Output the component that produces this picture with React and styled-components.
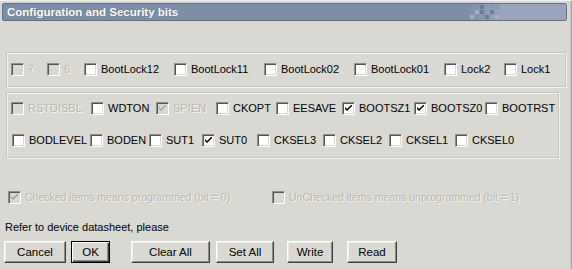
import React from "react";
import styled, { createGlobalStyle } from "styled-components";

const GlobalStyle = createGlobalStyle`
    html, body {
        margin: 0;
        padding: 0;
        background: #d9d8d2;
    }
    body {
        font-family: "Liberation Sans", Arial, sans-serif;
    }
`;

//Fuse data
const lockBits = [
    { label: "7", w: 36, disabled: true },
    { label: "6", w: 37, disabled: true },
    { label: "BootLock12", w: 90 },
    { label: "BootLock11", w: 90 },
    { label: "BootLock02", w: 90 },
    { label: "BootLock01", w: 90 },
    { label: "Lock2", w: 60 },
    { label: "Lock1" },
];

const highFuses = [
    { label: "RSTDISBL", w: 80, disabled: true },
    { label: "WDTON", w: 65 },
    { label: "SPIEN", w: 60, disabled: true, checked: true },
    { label: "CKOPT", w: 60 },
    { label: "EESAVE", w: 66 },
    { label: "BOOTSZ1", w: 72, checked: true },
    { label: "BOOTSZ0", w: 71, checked: true },
    { label: "BOOTRST" },
];

const lowFuses = [
    { label: "BODLEVEL", w: 78 },
    { label: "BODEN", w: 59 },
    { label: "SUT1", w: 53 },
    { label: "SUT0", w: 55, checked: true },
    { label: "CKSEL3", w: 66 },
    { label: "CKSEL2", w: 66 },
    { label: "CKSEL1", w: 66 },
    { label: "CKSEL0" },
];

const buttons = [
    { label: "Cancel", w: 62, ml: 0 },
    { label: "OK", w: 39, ml: 5, def: true },
    { label: "Clear All", w: 79, ml: 21 },
    { label: "Set All", w: 58, ml: 6 },
    { label: "Write", w: 46, ml: 13 },
    { label: "Read", w: 50, ml: 14 },
];

const CheckBox = ({ checked, disabled, label, w, size }) => (
    <Item $w={w}>
        <Box $disabled={disabled}>
            {checked && (
                <svg width="7" height="7" viewBox="0 0 7 7">
                    <path d="M0 2 L0 4 L2 6 L7 1 L7 -1 L2 4 Z" fill={disabled ? "#a3a29c" : "#000"} />
                </svg>
            )}
        </Box>
        <Label $disabled={disabled} $size={size}>{label}</Label>
    </Item>
);

const Checker = () => (
    <svg width="30" height="14" viewBox="0 0 30 14">
        <rect x="10" y="0" width="4" height="4" fill="#6b7b98" />
        <rect x="20" y="0" width="4" height="4" fill="#8796b0" />
        <rect x="25" y="0" width="4" height="4" fill="#8796b0" />
        <rect x="5" y="5" width="4" height="4" fill="#a4afc4" />
        <rect x="10" y="5" width="4" height="4" fill="#6b7b98" />
        <rect x="20" y="5" width="4" height="4" fill="#6b7b98" />
        <rect x="0" y="10" width="4" height="4" fill="#a4afc4" />
        <rect x="5" y="10" width="4" height="4" fill="#8796b0" />
        <rect x="15" y="10" width="4" height="4" fill="#6b7b98" />
        <rect x="25" y="10" width="4" height="4" fill="#a4afc4" />
    </svg>
);

const App = () => {
    return (
        <Window>
            <GlobalStyle />
            <TitleBar>
                <Title>Configuration and Security bits</Title>
                <Pattern>
                    <Checker />
                </Pattern>
            </TitleBar>
            <Group $mr={5}>
                <Row $h={33}>
                    {lockBits.map((b) => (
                        <CheckBox key={b.label} {...b} />
                    ))}
                </Row>
            </Group>
            <Group $mt={5} $mr={12}>
                <Row $h={31}>
                    {highFuses.map((b) => (
                        <CheckBox key={b.label} {...b} />
                    ))}
                </Row>
                <Row $h={33} $pl={1}>
                    {lowFuses.map((b) => (
                        <CheckBox key={b.label} {...b} />
                    ))}
                </Row>
            </Group>
            <Legend>
                <CheckBox label="Checked items means programmed (bit = 0)" w={264} size={10.5} checked disabled />
                <CheckBox label="UnChecked items means unprogrammed (bit = 1)" size={10.5} disabled />
            </Legend>
            <Note>Refer to device datasheet, please</Note>
            <ButtonBar>
                {buttons.map((b) => (
                    <Button key={b.label} $w={b.w} $ml={b.ml} $default={b.def}>
                        {b.label}
                    </Button>
                ))}
            </ButtonBar>
        </Window>
    );
};

const Window = styled.div`
    width: 572px;
    height: 269px;
    box-sizing: border-box;
    background: #d9d8d2;
    border-top: 1px solid #f1f0ec;
    border-right: 1px solid #a7a6a0;
    box-shadow: inset -1px 0 #c3c2bc;
    padding-top: 2px;
    display: flex;
    flex-direction: column;
    overflow: hidden;
`;

const TitleBar = styled.div`
    height: 18px;
    margin: 0 4px 0 2px;
    box-sizing: border-box;
    border: 1px solid #5f6f8c;
    border-radius: 2px;
    background: linear-gradient(to right, #7e8da8 0%, #7e8da8 82%, #9aa5bc 89%, #9aa5bc 100%);
    display: flex;
    align-items: center;
    padding-left: 4px;
`;

const Title = styled.span`
    color: #fff;
    font-weight: bold;
    font-size: 11.5px;
    text-shadow: 0 0 1px #4c5a74;
`;

const Pattern = styled.div`
    margin-left: auto;
    margin-right: 66px;
    display: flex;
`;

const Group = styled.div`
    margin: ${(p) => p.$mt || 31}px ${(p) => p.$mr}px 0 6px;
    border: 1px solid #c6c5be;
    box-shadow: inset 1px 1px #f3f2ee, 1px 1px #f3f2ee;
    padding: 0 4px;
`;

const Row = styled.div`
    height: ${(p) => p.$h}px;
    padding-left: ${(p) => p.$pl || 0}px;
    display: flex;
    align-items: center;
`;

const Item = styled.div`
    display: flex;
    align-items: center;
    flex: none;
    width: ${(p) => (p.$w ? `${p.$w}px` : "auto")};
    gap: 4px;
`;

const Box = styled.span`
    width: 13px;
    height: 13px;
    box-sizing: border-box;
    flex: none;
    border: 1px solid;
    border-color: #8e8d88 #ffffff #ffffff #8e8d88;
    box-shadow: inset 1px 1px #55544f, inset -1px -1px #d9d8d2;
    background: ${(p) => (p.$disabled ? "#d9d8d2" : "#fff")};
    display: flex;
    align-items: center;
    justify-content: center;
`;

const Label = styled.span`
    font-size: ${(p) => p.$size || 11}px;
    line-height: 13px;
    white-space: nowrap;
    color: ${(p) => (p.$disabled ? "#b8b7b0" : "#000")};
    text-shadow: ${(p) => (p.$disabled ? "1px 1px #f6f5f1" : "none")};
`;

const Legend = styled.div`
    margin: 33px 0 0 8px;
    display: flex;
    align-items: center;
    height: 13px;
`;

const Note = styled.div`
    margin: 16px 0 0 5px;
    font-size: 11px;
    line-height: 14px;
    color: #000;
`;

const ButtonBar = styled.div`
    margin: 7px 0 0 4px;
    display: flex;
    align-items: center;
`;

const Button = styled.button`
    width: ${(p) => p.$w}px;
    height: 22px;
    margin-left: ${(p) => p.$ml}px;
    padding: 0;
    box-sizing: border-box;
    font-family: "Liberation Sans", Arial, sans-serif;
    font-size: 11.5px;
    color: #000;
    background: #d9d8d2;
    border: 1px solid;
    border-color: #ffffff #404040 #404040 #ffffff;
    box-shadow: inset -1px -1px #8e8d88, inset 1px 1px #ecebe7;
    ${(p) =>
        p.$default &&
        `
        border-color: #000;
        box-shadow: inset 1px 1px #fff, inset -1px -1px #404040, inset -2px -2px #8e8d88;
    `}
`;

export default App;
